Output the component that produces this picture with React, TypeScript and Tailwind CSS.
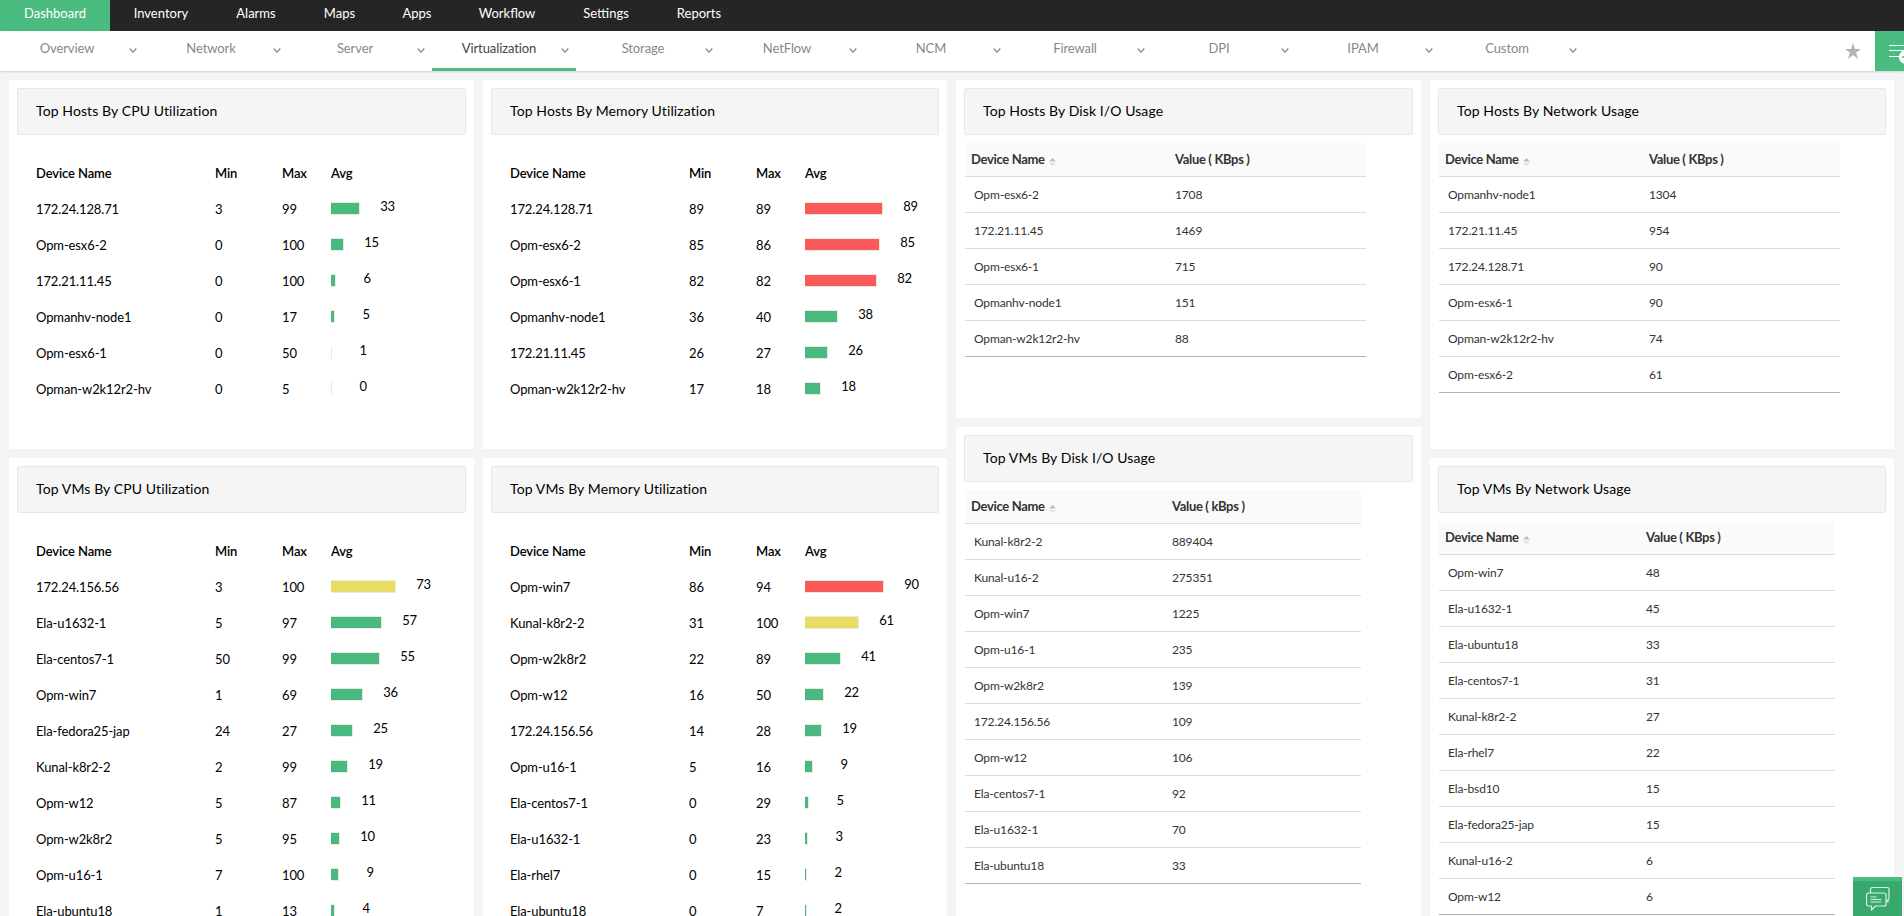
import { clsx } from 'clsx';

type UtilRow = [name: string, min: number, max: number, avg: number];
type UsageRow = [name: string, value: number];

const MAIN_TABS = [
  { label: 'Dashboard', width: 'w-[110px]' },
  { label: 'Inventory', width: 'w-[102px]' },
  { label: 'Alarms', width: 'w-[88px]' },
  { label: 'Maps', width: 'w-[79px]' },
  { label: 'Apps', width: 'w-[76px]' },
  { label: 'Workflow', width: 'w-[104px]' },
  { label: 'Settings', width: 'w-[94px]' },
  { label: 'Reports', width: 'w-[92px]' },
];

const SUB_TABS = [
  'Overview',
  'Network',
  'Server',
  'Virtualization',
  'Storage',
  'NetFlow',
  'NCM',
  'Firewall',
  'DPI',
  'IPAM',
  'Custom',
];

const hostsCpu: UtilRow[] = [
  ['172.24.128.71', 3, 99, 33],
  ['Opm-esx6-2', 0, 100, 15],
  ['172.21.11.45', 0, 100, 6],
  ['Opmanhv-node1', 0, 17, 5],
  ['Opm-esx6-1', 0, 50, 1],
  ['Opman-w2k12r2-hv', 0, 5, 0],
];

const vmsCpu: UtilRow[] = [
  ['172.24.156.56', 3, 100, 73],
  ['Ela-u1632-1', 5, 97, 57],
  ['Ela-centos7-1', 50, 99, 55],
  ['Opm-win7', 1, 69, 36],
  ['Ela-fedora25-jap', 24, 27, 25],
  ['Kunal-k8r2-2', 2, 99, 19],
  ['Opm-w12', 5, 87, 11],
  ['Opm-w2k8r2', 5, 95, 10],
  ['Opm-u16-1', 7, 100, 9],
  ['Ela-ubuntu18', 1, 13, 4],
];

const hostsMemory: UtilRow[] = [
  ['172.24.128.71', 89, 89, 89],
  ['Opm-esx6-2', 85, 86, 85],
  ['Opm-esx6-1', 82, 82, 82],
  ['Opmanhv-node1', 36, 40, 38],
  ['172.21.11.45', 26, 27, 26],
  ['Opman-w2k12r2-hv', 17, 18, 18],
];

const vmsMemory: UtilRow[] = [
  ['Opm-win7', 86, 94, 90],
  ['Kunal-k8r2-2', 31, 100, 61],
  ['Opm-w2k8r2', 22, 89, 41],
  ['Opm-w12', 16, 50, 22],
  ['172.24.156.56', 14, 28, 19],
  ['Opm-u16-1', 5, 16, 9],
  ['Ela-centos7-1', 0, 29, 5],
  ['Ela-u1632-1', 0, 23, 3],
  ['Ela-rhel7', 0, 15, 2],
  ['Ela-ubuntu18', 0, 7, 2],
];

const hostsDisk: UsageRow[] = [
  ['Opm-esx6-2', 1708],
  ['172.21.11.45', 1469],
  ['Opm-esx6-1', 715],
  ['Opmanhv-node1', 151],
  ['Opman-w2k12r2-hv', 88],
];

const vmsDisk: UsageRow[] = [
  ['Kunal-k8r2-2', 889404],
  ['Kunal-u16-2', 275351],
  ['Opm-win7', 1225],
  ['Opm-u16-1', 235],
  ['Opm-w2k8r2', 139],
  ['172.24.156.56', 109],
  ['Opm-w12', 106],
  ['Ela-centos7-1', 92],
  ['Ela-u1632-1', 70],
  ['Ela-ubuntu18', 33],
];

const hostsNetwork: UsageRow[] = [
  ['Opmanhv-node1', 1304],
  ['172.21.11.45', 954],
  ['172.24.128.71', 90],
  ['Opm-esx6-1', 90],
  ['Opman-w2k12r2-hv', 74],
  ['Opm-esx6-2', 61],
];

const vmsNetwork: UsageRow[] = [
  ['Opm-win7', 48],
  ['Ela-u1632-1', 45],
  ['Ela-ubuntu18', 33],
  ['Ela-centos7-1', 31],
  ['Kunal-k8r2-2', 27],
  ['Ela-rhel7', 22],
  ['Ela-bsd10', 15],
  ['Ela-fedora25-jap', 15],
  ['Kunal-u16-2', 6],
  ['Opm-w12', 6],
];

function barColor(value: number) {
  if (value > 80) return 'bg-[#fb5a5a]';
  if (value > 60) return 'bg-[#e8dd64]';
  return 'bg-[#48ba7f]';
}

function Panel({
  title,
  className,
  children,
}: {
  title: string;
  className?: string;
  children: React.ReactNode;
}) {
  return (
    <section className={clsx('shrink-0 bg-white px-2 pt-2', className)}>
      <h2 className="h-[47px] rounded-xs border border-[#e7e7e7] bg-[#f5f5f5] pl-[18px] text-[14px] leading-[43px] tracking-[0.1px] text-black">
        {title}
      </h2>
      {children}
    </section>
  );
}

function UtilizationTable({
  rows,
  trackWidth,
}: {
  rows: UtilRow[];
  trackWidth: number;
}) {
  return (
    <div className="pt-5 pl-[19px] text-[13px] leading-[36px] tracking-[-0.12px] text-black">
      <div className="flex h-9 font-semibold">
        <span className="w-[179px]">Device Name</span>
        <span className="w-[67px]">Min</span>
        <span className="w-[49px]">Max</span>
        <span>Avg</span>
      </div>
      {rows.map(([name, min, max, avg]) => (
        <div key={name} className="flex h-9">
          <span className="w-[179px]">{name}</span>
          <span className="w-[67px]">{min}</span>
          <span className="w-[49px]">{max}</span>
          <div
            className={clsx(
              'mt-[11px] box-content h-[11px] border-y border-r border-[#eeeadb]',
              barColor(avg),
            )}
            style={{
              width: Math.max(Math.round((avg * trackWidth) / 100) - 1, 0),
            }}
          />
          <span className="w-[35px] text-right leading-[31px]">{avg}</span>
        </div>
      ))}
    </div>
  );
}

function SortArrows() {
  return (
    <svg className="mt-[5px] ml-1 h-2 w-[7px]" viewBox="0 0 7 8">
      <path d="M0 3.500 3.500 0 7 3.500Z" fill="#bbb" />
      <path d="M0 5 3.500 8 7 5Z" fill="#e0e0e0" />
    </svg>
  );
}

function UsageTable({
  rows,
  unit,
  wide,
}: {
  rows: UsageRow[];
  unit: string;
  wide?: boolean;
}) {
  const nameWidth = wide ? 'w-[210px]' : 'w-[207px]';

  return (
    <div
      className={clsx(
        'mt-2 ml-px border-b border-[#b0b0b0] text-[12px] tracking-[-0.15px] text-[#333]',
        wide ? 'w-[401px]' : 'w-[396px]',
      )}
    >
      <div className="flex h-[34px] items-center border-b border-[#dddddd] bg-[#fafafa] text-[13px] font-bold tracking-[-0.33px]">
        <span className={clsx('flex items-center pl-[6px]', nameWidth)}>
          Device Name
          <SortArrows />
        </span>
        <span>Value ( {unit} )</span>
      </div>
      <div className="divide-y divide-[#dddddd]">
        {rows.map(([name, value]) => (
          <div key={name} className="flex h-9 items-center last:h-[35px]">
            <span className={clsx('pl-[9px]', nameWidth)}>{name}</span>
            <span>{value}</span>
          </div>
        ))}
      </div>
    </div>
  );
}

function ChatIcon() {
  return (
    <svg
      className="h-6 w-6"
      viewBox="0 0 24 24"
      fill="none"
      stroke="#d9f2e4"
      strokeWidth="1.2"
      strokeLinejoin="round"
    >
      <path d="M4.500 6V2.500a2 2 0 0 1 2-2H21a2 2 0 0 1 2 2V11a2 2 0 0 1-1 1.800V15l-2-1.500" />
      <path d="M2.500 6H18a2 2 0 0 1 2 2v9a2 2 0 0 1-2 2H9.500L5.500 23v-4h-3a2 2 0 0 1-2-2V8a2 2 0 0 1 2-2Z" />
      <path d="M4.500 10h6M4.500 12.500h11M4.500 15h11" />
    </svg>
  );
}

export default function App() {
  return (
    <div className="relative flex h-[916px] w-full flex-col overflow-hidden bg-[#f4f4f7] font-[Lato,sans-serif]">
      {/* Main navigation */}
      <nav className="flex h-[31px] shrink-0 bg-[#252525] text-[13px] leading-[26px] text-white">
        {MAIN_TABS.map((tab, i) => (
          <a
            key={tab.label}
            className={clsx('text-center', tab.width, i === 0 && 'bg-[#4abc80]')}
          >
            {tab.label}
          </a>
        ))}
      </nav>

      {/* Dashboard tabs */}
      <div className="flex h-[40px] shrink-0 bg-white shadow-[0_1px_2px_rgba(0,0,0,0.15)]">
        {SUB_TABS.map((label) => (
          <a
            key={label}
            className={clsx(
              'flex h-[40px] w-36 border-b-3 text-[13px] leading-[34px] tracking-[-0.1px]',
              label === 'Virtualization'
                ? 'border-[#4abc80] text-[#444]'
                : 'border-transparent text-[#888]',
            )}
          >
            <span className="w-[134px] text-center">{label}</span>
            <svg
              className="mt-[17px] -ml-[5px] h-[5px] w-2 shrink-0"
              viewBox="0 0 8 5"
              fill="none"
              stroke="#888"
              strokeWidth="1.2"
            >
              <path d="M.7.5 4 4.200 7.300.5" />
            </svg>
          </a>
        ))}
        <svg className="mt-3 ml-auto h-4 w-4" viewBox="0 0 16 16" fill="#b3b3b3">
          <path d="M8 0l1.900 6H16l-4.900 3.600L13 16l-5-4-5 4 1.900-6.400L0 6h6.100z" />
        </svg>
        <div className="ml-[14px] h-10 w-[29px] overflow-hidden bg-[#4abc80]">
          <svg className="h-10 w-[29px]" viewBox="0 0 29 40">
            <path
              d="M14 14.500h15M14 19.500h15M14 25.500h11"
              stroke="#fff"
              strokeWidth="1.100"
            />
            <circle cx="31" cy="26" r="7" fill="#fff" />
            <path d="M27 26h6" stroke="#4abc80" strokeWidth="1.300" />
          </svg>
        </div>
      </div>

      {/* Widgets */}
      <main className="flex min-h-0 flex-1 gap-[9px] pt-[9px] pl-[9px]">
        <div className="flex w-[465px] flex-col gap-[9px]">
          <Panel title="Top Hosts By CPU Utilization" className="h-[369px]">
            <UtilizationTable rows={hostsCpu} trackWidth={89} />
          </Panel>
          <Panel title="Top VMs By CPU Utilization" className="h-[500px]">
            <UtilizationTable rows={vmsCpu} trackWidth={89} />
          </Panel>
        </div>
        <div className="flex w-[464px] flex-col gap-[9px]">
          <Panel title="Top Hosts By Memory Utilization" className="h-[369px]">
            <UtilizationTable rows={hostsMemory} trackWidth={88} />
          </Panel>
          <Panel title="Top VMs By Memory Utilization" className="h-[500px]">
            <UtilizationTable rows={vmsMemory} trackWidth={88} />
          </Panel>
        </div>
        <div className="flex w-[465px] flex-col gap-[9px]">
          <Panel title="Top Hosts By Disk I/O Usage" className="h-[338px]">
            <UsageTable rows={hostsDisk} unit="KBps" wide />
          </Panel>
          <Panel title="Top VMs By Disk I/O Usage" className="h-[500px]">
            <UsageTable rows={vmsDisk} unit="kBps" />
          </Panel>
        </div>
        <div className="flex w-[464px] flex-col gap-[9px]">
          <Panel title="Top Hosts By Network Usage" className="h-[369px]">
            <UsageTable rows={hostsNetwork} unit="KBps" wide />
          </Panel>
          <Panel title="Top VMs By Network Usage" className="h-[500px]">
            <UsageTable rows={vmsNetwork} unit="KBps" />
          </Panel>
        </div>
      </main>

      {/* Chat button */}
      <button className="absolute right-[2px] bottom-0 flex h-[39px] w-[49px] items-center justify-center border-t-4 border-[#4abc80] bg-[#38a96c] pt-px">
        <ChatIcon />
      </button>
    </div>
  );
}
